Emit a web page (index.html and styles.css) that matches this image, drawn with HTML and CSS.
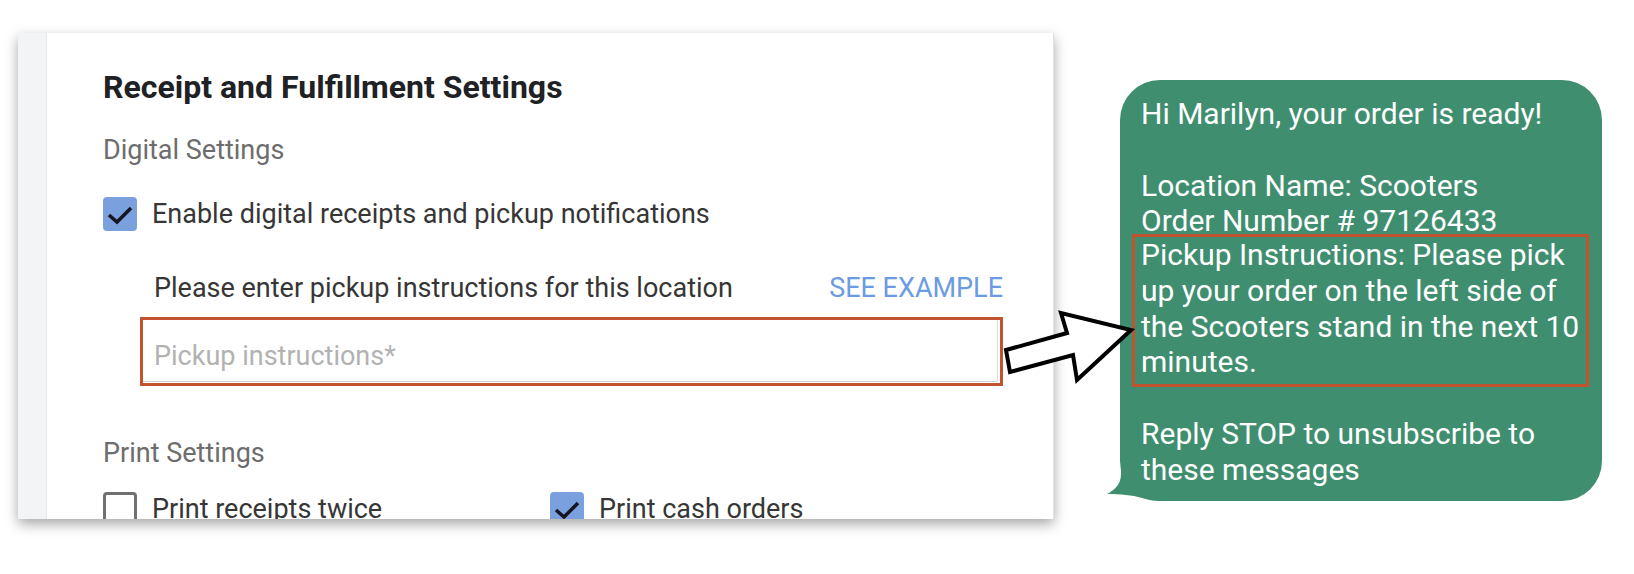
FILE: index.html
```html
<!doctype html>
<html lang="en">
<head>
	<meta charset="utf-8">
	<title>Receipt and Fulfillment Settings</title>
	<link rel="stylesheet" href="styles.css">
</head>
<body>
	<div class="stage">
		<div class="card">
			<div class="strip"></div>
			<div class="main">
				<div class="title">Receipt and Fulfillment Settings</div>
				<div class="subhead">Digital Settings</div>
				<div class="check-row enable">
					<span class="box on">
						<svg viewBox="0 0 34 34" width="34" height="34"><path d="M6 18 L14 25 L28 11" fill="none" stroke="#161620" stroke-width="3.5"/></svg>
					</span>
					<span class="label">Enable digital receipts and pickup notifications</span>
				</div>
				<div class="instructions">
					<span class="label">Please enter pickup instructions for this location</span>
					<span class="link">SEE EXAMPLE</span>
				</div>
				<div class="callout">
					<div class="field">Pickup instructions*</div>
				</div>
				<div class="subhead print">Print Settings</div>
				<div class="print-grid">
					<div class="check-row">
						<span class="box"></span>
						<span class="label">Print receipts twice</span>
					</div>
					<div class="check-row">
						<span class="box on">
							<svg viewBox="0 0 34 34" width="34" height="34"><path d="M6 18 L14 25 L28 11" fill="none" stroke="#161620" stroke-width="3.5"/></svg>
						</span>
						<span class="label">Print cash orders</span>
					</div>
				</div>
			</div>
		</div>

		<div class="sms">
			<p>Hi Marilyn, your order is ready!</p>
			<p class="gap">Location Name: Scooters<br>Order Number # 97126433</p>
			<div class="mark">Pickup Instructions: Please pick<br>up your order on the left side of<br>the Scooters stand in the next 10<br>minutes.</div>
			<p class="gap">Reply STOP to unsubscribe to<br>these messages</p>
			<svg class="tail" viewBox="0 0 56 48" width="56" height="48"><path d="M15 0 L15 20 C15 30 9 36 1 40 C14 40 26 41 36 44 C42 46 48 47 56 47 L56 0 Z" fill="#3f8e70"/></svg>
		</div>

		<svg class="arrow" viewBox="0 0 140 85" width="140" height="85">
			<polygon points="6,45 67,28 61,8 131,25 77,75 73,50 10,67" fill="#fff" stroke="#000" stroke-width="4" stroke-linejoin="miter"/>
		</svg>
	</div>
</body>
</html>
```

FILE: styles.css
```css
body{
	margin: 0;
	background: #fff;
	font-family: 'Roboto', 'Liberation Sans', sans-serif;
}
.stage{
	position: relative;
	display: flex;
	align-items: flex-start;
	height: 574px;
	overflow: hidden;
}
.card{
	display: flex;
	margin: 33px 0 0 18px;
	width: 1035px;
	height: 486px;
	background: #fff;
	overflow: hidden;
	box-shadow: 0 5px 12px rgba(0,0,0,0.35);
	border-right: 1px solid #e2e2e2;
}
.strip{
	width: 28px;
	flex: none;
	background: #f3f4f6;
	border-right: 1px solid #e6e7e9;
}
.main{
	flex: 1;
	padding: 34px 58px 0 56px;
}
.title{
	font-size: 32px;
	font-weight: 700;
	line-height: 40px;
	color: #202124;
}
.subhead{
	margin-top: 27px;
	font-size: 27px;
	line-height: 32px;
	color: #6d6d6d;
}
.subhead.print{
	margin-top: 51px;
}
.check-row{
	display: flex;
	align-items: center;
}
.check-row.enable{
	margin-top: 31px;
}
.label{
	font-size: 27px;
	line-height: 34px;
	color: #363636;
}
.box{
	width: 34px;
	height: 34px;
	box-sizing: border-box;
	border-radius: 4px;
	border: 3px solid #707070;
	margin-right: 15px;
	flex: none;
}
.box.on{
	border: none;
	background: #7aa0de;
}
.box svg{
	display: block;
}
.instructions{
	display: flex;
	justify-content: space-between;
	margin: 40px 0 0 51px;
}
.link{
	font-size: 27px;
	line-height: 34px;
	color: #6b9be2;
}
.callout{
	margin: 12px 0 0 37px;
	width: 863px;
	height: 69px;
	box-sizing: border-box;
	border: 3px solid #c1532f;
	padding: 0 2px 0 0;
}
.field{
	height: 62px;
	box-sizing: border-box;
	padding: 19px 0 0 11px;
	font-size: 27px;
	line-height: 34px;
	color: #b2b2b2;
	border-bottom: 1px solid #cfcfcf;
	border-right: 1px solid #dedede;
}
.print-grid{
	display: grid;
	grid-template-columns: 447px auto;
	margin-top: 23px;
}
.sms{
	position: relative;
	margin: 80px 0 0 66px;
	width: 482px;
	box-sizing: border-box;
	padding: 16px 13px 14px 21px;
	background: #3f8e70;
	border-radius: 40px;
	color: #fff;
	font-size: 30px;
	line-height: 35.75px;
}
.sms p{
	margin: 0;
}
.sms .gap{
	margin-top: 35.75px;
}
.mark{
	margin: -5px 0 -7px -9px;
	padding: 0 0 4px 6px;
	border: 3px solid #c1532f;
}
.tail{
	position: absolute;
	left: -14px;
	bottom: -1px;
	z-index: -1;
}
.arrow{
	position: absolute;
	left: 1000px;
	top: 305px;
}
```
